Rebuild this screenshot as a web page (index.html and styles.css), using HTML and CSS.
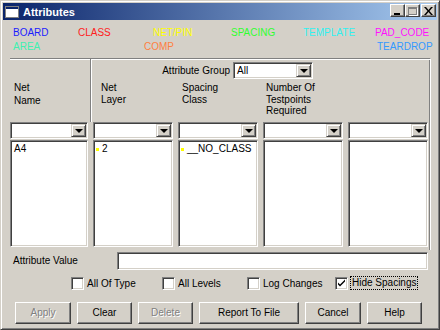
FILE: index.html
```html
<!DOCTYPE html>
<html lang="en">
<head>
    <meta charset="UTF-8">
    <title>Attributes</title>
    <link rel="stylesheet" href="styles.css">
</head>
<body>
    <div class="window">
        <div class="titlebar">
            <svg class="app-icon" width="14" height="12" viewBox="0 0 14 12">
                <rect x="0.5" y="0.5" width="13" height="11" fill="#fff" stroke="#808080"/>
                <rect x="1" y="1" width="12" height="2" fill="#0a246a"/>
            </svg>
            <span class="title">Attributes</span>
            <div class="caption-buttons">
                <div class="cap-btn"><span class="min-glyph"></span></div>
                <div class="cap-btn"><span class="max-glyph"></span></div>
                <div class="cap-btn close">
                    <svg width="9" height="8" viewBox="0 0 9 8"><path d="M0 0h2l2.5 3 2.5-3h2l-3.5 4 3.5 4h-2l-2.5-3-2.5 3h-2l3.5-4z" fill="#000"/></svg>
                </div>
            </div>
        </div>

        <!-- 顏色圖例 -->
        <div class="legend">
            <div class="legend-row">
                <span class="w65 c-board">BOARD</span>
                <span class="w75 c-class">CLASS</span>
                <span class="w78 c-netpin">NET/PIN</span>
                <span class="w72 c-spacing">SPACING</span>
                <span class="w72 c-template">TEMPLATE</span>
                <span class="c-padcode">PAD_CODE</span>
            </div>
            <div class="legend-row">
                <span class="w131 c-area">AREA</span>
                <span class="w233 c-comp">COMP</span>
                <span class="c-teardrop">TEARDROP</span>
            </div>
        </div>

        <div class="panel">
            <div class="heads">
                <div class="head-left">Net<br>Name</div>
                <div class="head-right">
                    <div class="group-row">
                        <span class="group-label">Attribute Group</span>
                        <div class="combo group-combo">
                            <span class="combo-text">All</span>
                            <span class="combo-btn"><span class="arrow"></span></span>
                        </div>
                    </div>
                    <div class="col-heads">
                        <div class="ch ch2">Net<br>Layer</div>
                        <div class="ch ch3">Spacing<br>Class</div>
                        <div class="ch ch4">Number Of<br>Testpoints<br>Required</div>
                        <div class="ch"></div>
                    </div>
                </div>
            </div>
            <div class="cols filters">
                <div class="combo"><span class="combo-text"></span><span class="combo-btn"><span class="arrow"></span></span></div>
                <div class="combo"><span class="combo-text"></span><span class="combo-btn"><span class="arrow"></span></span></div>
                <div class="combo"><span class="combo-text"></span><span class="combo-btn"><span class="arrow"></span></span></div>
                <div class="combo"><span class="combo-text"></span><span class="combo-btn"><span class="arrow"></span></span></div>
                <div class="combo"><span class="combo-text"></span><span class="combo-btn"><span class="arrow"></span></span></div>
            </div>
            <div class="cols lists">
                <div class="list"><div class="item">A4</div></div>
                <div class="list"><div class="item"><span class="mark"></span>2</div></div>
                <div class="list"><div class="item"><span class="mark"></span>__NO_CLASS</div></div>
                <div class="list"></div>
                <div class="list"></div>
            </div>
        </div>

        <div class="attr-row">
            <span class="attr-label">Attribute Value</span>
            <div class="field attr-input"></div>
        </div>

        <div class="check-row">
            <label class="check w91"><span class="box"></span><span>All Of Type</span></label>
            <label class="check w85"><span class="box"></span><span>All Levels</span></label>
            <label class="check w88"><span class="box"></span><span>Log Changes</span></label>
            <label class="check"><span class="box">
                <svg width="9" height="9" viewBox="0 0 9 9"><path d="M1 3.5l2 2 5-5v2l-5 5-2-2z" fill="#000"/></svg>
            </span><span class="focus">Hide Spacings</span></label>
        </div>

        <div class="button-row">
            <div class="btn w56 disabled">Apply</div>
            <div class="btn w55">Clear</div>
            <div class="btn w55 disabled">Delete</div>
            <div class="btn w100">Report To File</div>
            <div class="btn w56">Cancel</div>
            <div class="btn w55">Help</div>
        </div>
    </div>
</body>
</html>
```
FILE: styles.css
```css
* {
    box-sizing: border-box;
}
body {
    margin: 0;
    background: #d4d0c8;
    font-family: "Liberation Sans", Arial, sans-serif;
    font-size: 10px;
    color: #000;
}
.window {
    width: 440px;
    height: 330px;
    background: #d4d0c8;
    border: 1px solid;
    border-color: #d4d0c8 #404040 #404040 #d4d0c8;
    box-shadow: inset 1px 1px #fff, inset -1px -1px #808080;
    padding: 2px;
    display: flex;
    flex-direction: column;
}

/* 標題列 */
.titlebar {
    height: 17px;
    display: flex;
    align-items: center;
    padding-left: 2px;
    padding-right: 1px;
    background: linear-gradient(to right, #0a246a, #a6caf0);
}
.app-icon {
    margin-right: 4px;
}
.title {
    color: #fff;
    font-weight: bold;
    font-size: 11px;
    flex: 1;
}
.caption-buttons {
    display: flex;
    align-self: flex-start;
    margin-top: 1px;
}
.cap-btn {
    width: 15px;
    height: 13px;
    background: #d4d0c8;
    border: 1px solid;
    border-color: #fff #404040 #404040 #fff;
    box-shadow: inset -1px -1px #808080;
    display: flex;
    align-items: center;
    justify-content: center;
    position: relative;
}
.cap-btn.close {
    margin-left: 1px;
}
.min-glyph {
    width: 6px;
    height: 2px;
    background: #000;
    margin-top: 6px;
    margin-left: -2px;
}
.max-glyph {
    width: 9px;
    height: 8px;
    border: 1px solid #808080;
    border-top-width: 2px;
    box-shadow: 1px 1px #fff;
}

/* 圖例 */
.legend {
    padding: 6px 0 0 10px;
    line-height: 14px;
}
.legend-row {
    display: flex;
    height: 14px;
}
.w65 { width: 65px; }
.w72 { width: 72px; }
.w75 { width: 75px; }
.w78 { width: 78px; }
.w131 { width: 131px; }
.w233 { width: 233px; }
.c-board { color: #1c1cff; }
.c-class { color: #ff2020; }
.c-netpin { color: #ffff00; }
.c-spacing { color: #30ff30; }
.c-template { color: #30f0f0; }
.c-padcode { color: #ff10ff; }
.c-area { color: #40f0b0; }
.c-comp { color: #ff8040; }
.c-teardrop { color: #3399ff; }

/* 主區塊 */
.panel {
    margin: 4px 6px 0 7px;
    border-top: 1px solid #808080;
    border-right: 1px solid #fff;
    box-shadow: inset 0 1px #fff, inset -1px 0 #808080;
    padding-bottom: 3px;
}
.heads {
    display: flex;
    height: 63px;
}
.head-left {
    width: 81px;
    border-right: 1px solid #808080;
    box-shadow: 1px 0 #fff;
    padding: 23px 0 0 4px;
    line-height: 12.5px;
}
.head-right {
    flex: 1;
}
.group-row {
    display: flex;
    margin-top: 3px;
    height: 18px;
}
.group-label {
    width: 142px;
    text-align: right;
    padding-right: 3px;
    line-height: 18px;
}
.group-combo {
    width: 80px;
    height: 18px;
}
.col-heads {
    display: grid;
    grid-template-columns: 80px 80px 80px 80px;
    column-gap: 5px;
    margin: 2px 0 0 2px;
    line-height: 11.7px;
}
.ch2 { padding-left: 8px; }
.ch3 { padding-left: 4px; }
.ch4 { padding-left: 3px; }

.cols {
    display: grid;
    grid-template-columns: 78px 80px 80px 80px 80px;
    column-gap: 5px;
}

/* 下拉選單 */
.combo, .field, .list, .box {
    background: #fff;
    border: 1px solid;
    border-color: #808080 #fff #fff #808080;
    box-shadow: inset 1px 1px #404040, inset -1px -1px #d4d0c8;
}
.combo {
    height: 17px;
    display: flex;
    padding: 1px;
}
.combo-text {
    flex: 1;
    padding-left: 2px;
    line-height: 14px;
}
.combo-btn {
    width: 15px;
    background: #d4d0c8;
    border: 1px solid;
    border-color: #d4d0c8 #404040 #404040 #d4d0c8;
    box-shadow: inset 1px 1px #fff, inset -1px -1px #808080;
    display: flex;
    align-items: center;
    justify-content: center;
}
.arrow {
    width: 0;
    height: 0;
    border-left: 4px solid transparent;
    border-right: 4px solid transparent;
    border-top: 4px solid #000;
    margin-top: 1px;
}
.lists {
    margin-top: 1px;
    height: 107px;
}
.list {
    padding: 2px;
}
.item {
    line-height: 12px;
    padding-left: 1px;
    display: flex;
    align-items: center;
}
.mark {
    width: 3px;
    height: 3px;
    background: #ffff00;
    margin: 0 3px 0 -1px;
}

/* 屬性值 */
.attr-row {
    display: flex;
    margin-top: 2px;
    padding-left: 10px;
}
.attr-label {
    width: 104px;
    line-height: 18px;
}
.attr-input {
    width: 311px;
    height: 18px;
}

/* 勾選框 */
.check-row {
    display: flex;
    margin-top: 6px;
    padding-left: 68px;
    height: 14px;
}
.check {
    display: flex;
    align-items: center;
}
.w85 { width: 85px; }
.w88 { width: 88px; }
.w91 { width: 91px; }
.box {
    width: 13px;
    height: 13px;
    margin-right: 2px;
    display: flex;
    align-items: center;
    justify-content: center;
}
.check span + span {
    padding-left: 1px;
}
.focus {
    border: 1px dotted #000;
    padding: 0 1px;
    line-height: 12px;
}

/* 按鈕 */
.button-row {
    display: flex;
    gap: 6px;
    margin-top: 12px;
    padding-left: 12px;
}
.btn {
    height: 22px;
    background: #d4d0c8;
    border: 1px solid;
    border-color: #fff #404040 #404040 #fff;
    box-shadow: inset -1px -1px #808080;
    text-align: center;
    line-height: 20px;
}
.w55 { width: 55px; }
.w56 { width: 56px; }
.w100 { width: 100px; }
.btn.disabled {
    color: #808080;
    text-shadow: 1px 1px #fff;
}
```
